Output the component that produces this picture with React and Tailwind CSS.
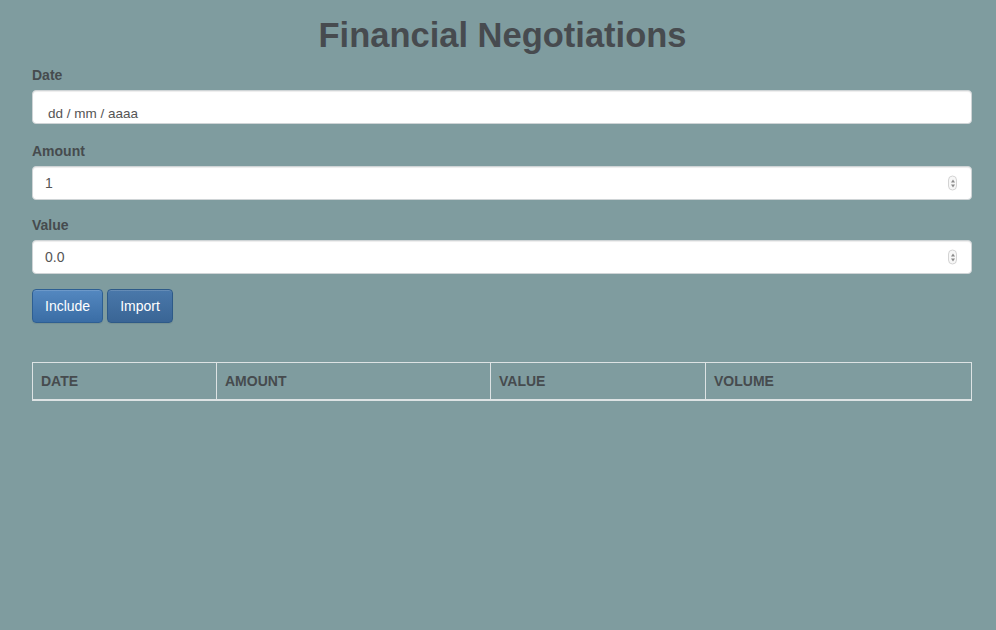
import React from "react";

function Spinner() {
  return (
    <div className="absolute right-[14px] top-1/2 -translate-y-1/2 w-[9px] h-[15px] rounded-full border border-[#d4d4d4] bg-[#f7f7f7] flex flex-col items-center justify-center gap-[2px]">
      <div className="w-0 h-0 border-l-[2.5px] border-r-[2.5px] border-b-[3px] border-l-transparent border-r-transparent border-b-[#8a8a8a]" />
      <div className="w-0 h-0 border-l-[2.5px] border-r-[2.5px] border-t-[3px] border-l-transparent border-r-transparent border-t-[#8a8a8a]" />
    </div>
  );
}

function Field({ label, children, mb = "mb-[15px]" }) {
  return (
    <div className={mb}>
      <div className="text-[14px] leading-[20px] font-bold text-[#464b4e] mb-[5px]">{label}</div>
      {children}
    </div>
  );
}

const boxCls =
  "relative h-[34px] w-full bg-white border border-[#cfd4d6] rounded-[4px] shadow-[inset_0_1px_1px_rgba(0,0,0,0.075)] text-[14px] text-[#555]";

export default function App() {
  return (
    <div
      className="min-h-[630px] w-full bg-[#7f9c9f]"
      style={{ fontFamily: '"Liberation Sans", Arial, Helvetica, sans-serif' }}
    >
      <div className="ml-[32px] w-[940px] pt-[16px]">
        <h1 className="text-center text-[34.5px] leading-[39px] font-bold text-[#474b4f] mb-[10px] pl-[1px]">
          Financial Negotiations
        </h1>
        <Field label="Date" mb="mb-[17px]">
          <div className={boxCls}>
            <div className="absolute left-[15px] top-[15px] leading-[16px] text-[13.5px] text-[#555]">dd / mm / aaaa</div>
          </div>
        </Field>
        <Field label="Amount">
          <div className={boxCls + " flex items-center pl-[12px]"}>
            1
            <Spinner />
          </div>
        </Field>
        <Field label="Value">
          <div className={boxCls + " flex items-center pl-[12px]"}>
            0.0
            <Spinner />
          </div>
        </Field>
        <div className="flex gap-[4px]">
          <button className="h-[34px] px-[12px] rounded-[4px] border border-[#2e5f93] bg-gradient-to-b from-[#5488c0] to-[#3a6da5] text-white text-[14px] shadow-[inset_0_1px_0_rgba(255,255,255,0.15),0_1px_1px_rgba(0,0,0,0.075)]">
            Include
          </button>
          <button className="h-[34px] px-[12px] rounded-[4px] border border-[#2e5a88] bg-gradient-to-b from-[#4a78aa] to-[#3a6595] text-white text-[14px] shadow-[inset_0_1px_0_rgba(255,255,255,0.15),0_1px_1px_rgba(0,0,0,0.075)]">
            Import
          </button>
        </div>
        <table className="mt-[39px] w-full border-collapse border border-[#dde3e4] text-left">
          <thead>
            <tr className="border-b-2 border-[#dde3e4]">
              <th className="w-[184px] border border-[#dde3e4] px-[8px] py-[8px] text-[14px] leading-[20px] font-bold text-[#464b4e]">DATE</th>
              <th className="w-[274px] border border-[#dde3e4] px-[8px] py-[8px] text-[14px] leading-[20px] font-bold text-[#464b4e]">AMOUNT</th>
              <th className="w-[215px] border border-[#dde3e4] px-[8px] py-[8px] text-[14px] leading-[20px] font-bold text-[#464b4e]">VALUE</th>
              <th className="border border-[#dde3e4] border-b-2 px-[8px] py-[8px] text-[14px] leading-[20px] font-bold text-[#464b4e]">VOLUME</th>
            </tr>
          </thead>
        </table>
      </div>
    </div>
  );
}
